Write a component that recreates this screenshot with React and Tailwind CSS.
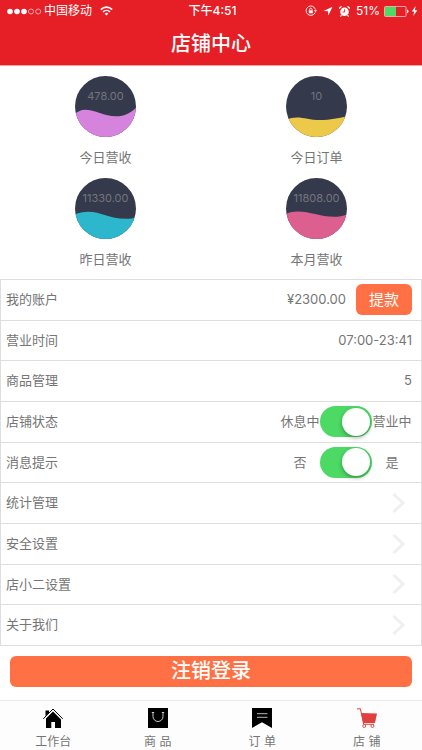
import React, { useState } from 'react'

const gauges = [
  {
    label: '今日营收',
    value: '478.00',
    fill: '#d683dd',
    wave: 'M0 37.5 C4 35 6 33.7 10 33.7 C20 33.7 29 40.3 41 40.3 C50 40.3 55 37 61 32 V61 H0 Z'
  },
  {
    label: '今日订单',
    value: '10',
    fill: '#edc94a',
    wave: 'M0 44 C4 42 7 41.4 11 41.4 C18 41.4 24 44 34 44 C45 44 52 42 61 40.5 V61 H0 Z'
  },
  {
    label: '昨日营收',
    value: '11330.00',
    fill: '#2cb7cd',
    wave: 'M0 36.3 C4 34.5 8 33.7 13 33.7 C26 33.7 34 40.8 51 40.8 C55 40.8 58 40.4 61 39.5 V61 H0 Z'
  },
  {
    label: '本月营收',
    value: '11808.00',
    fill: '#dc5f8f',
    wave: 'M0 36 C4 34.3 7 33.6 12 33.6 C24 33.6 34 38.8 48 38.8 C53 38.8 57 38 61 36.5 V61 H0 Z'
  }
]

const links = ['统计管理', '安全设置', '店小二设置', '关于我们']

// Status bar
const StatusBar = () => (
  <div className="grid grid-cols-[1fr_auto_1fr] items-center h-[22px] pl-[7px] pr-1 text-[12px] leading-4">
    <div className="flex items-center">
      <svg className="w-[35px] h-[7px]" viewBox="0 0 35 7" fill="#fff">
        <circle cx="3" cy="3.5" r="2.8" />
        <circle cx="10" cy="3.5" r="2.8" />
        <circle cx="17" cy="3.5" r="2.8" />
        <circle cx="24" cy="3.5" r="2.5" fill="none" stroke="#fff" strokeWidth="0.6" />
        <circle cx="31.2" cy="3.5" r="2.5" fill="none" stroke="#fff" strokeWidth="0.6" />
      </svg>
      <span className="ml-0.5">中国移动</span>
      <svg className="ml-2 w-[13px] h-[10px]" viewBox="0 0 13 10" fill="none" stroke="#fff" strokeWidth="1.6">
        <path d="M0.8 3.6 C4 0.3 9 0.3 12.2 3.6" />
        <path d="M3 5.9 C5 4 8 4 10 5.9" />
        <path d="M4.6 7.6 C5.8 6.6 7.2 6.6 8.4 7.6 L6.5 9.6 Z" fill="#fff" stroke="none" />
      </svg>
    </div>
    <span className="font-medium">下午4:51</span>
    <div className="flex items-center justify-end">
      <svg className="w-3 h-3" viewBox="0 0 12 12" fill="none" stroke="#fff" strokeWidth="0.9">
        <path d="M10.2 7.4 A4.7 4.7 0 1 1 10.4 4.6" />
        <path d="M9 5.2 H12 L10.5 7.2 Z" fill="#fff" stroke="none" />
        <rect x="3.8" y="5.3" width="4" height="3" fill="#fff" stroke="none" />
        <path d="M4.6 5.4 V4.4 A1.2 1.2 0 0 1 7 4.4 V5.4" strokeWidth="0.8" />
      </svg>
      <svg className="ml-1.5 w-[10px] h-[10px]" viewBox="0 0 10 10" fill="#fff">
        <path d="M9.5 0.8 L0.6 4.9 L5 5.3 L5.4 9.6 Z" />
      </svg>
      <svg className="ml-1.5 w-[11px] h-[11px]" viewBox="0 0 11 11" fill="#fff">
        <circle cx="5.5" cy="5.8" r="4.3" />
        <path d="M0.3 3.2 A2 2 0 0 1 3.2 0.6 Z M10.7 3.2 A2 2 0 0 0 7.8 0.6 Z" />
        <path d="M2.6 9 L1.4 10.6 M8.4 9 L9.6 10.6" stroke="#fff" strokeWidth="1.2" />
        <path d="M5.6 3.3 V6 H3.6" fill="none" stroke="#e61e25" strokeWidth="0.9" />
      </svg>
      <span className="ml-1.5">51%</span>
      <svg className="ml-1 w-[25px] h-[11px]" viewBox="0 0 25 11">
        <rect x="0.5" y="0.5" width="21.5" height="10" rx="1" fill="none" stroke="#fff" strokeWidth="0.6" />
        <rect x="1" y="1" width="11" height="9" fill="#4cd964" />
        <path d="M23 3.6 C25 4 25 7 23 7.4 Z" fill="#fff" />
      </svg>
      <svg className="ml-0.5 w-[7px] h-[10px]" viewBox="0 0 7 10" fill="#fff">
        <path d="M4.6 0 L0.8 5.6 H3.2 L2.2 10 L6.4 4.2 H3.9 Z" />
      </svg>
    </div>
  </div>
)

const Gauge = ({ label, value, fill, wave, id }) => (
  <div className="flex flex-col items-center">
    <div className="relative w-[61px] h-[61px]">
      <svg className="w-full h-full" viewBox="0 0 61 61">
        <clipPath id={id}>
          <circle cx="30.5" cy="30.5" r="30.5" />
        </clipPath>
        <g clipPath={`url(#${id})`}>
          <rect width="61" height="61" fill="#35394c" />
          <path d={wave} fill={fill} />
        </g>
      </svg>
      <span className="absolute inset-x-0 top-3 text-center text-[11px] leading-4 text-[#74757c]">{value}</span>
    </div>
    <span className="mt-[11px] leading-[18px]">{label}</span>
  </div>
)

const Row = ({ label, children }) => (
  <div className="flex items-center justify-between pl-[5px] pr-[9px] border-b border-[#dedede]">
    <span>{label}</span>
    {children}
  </div>
)

const SwitchRow = ({ label, off, on }) => {
  const [checked, setChecked] = useState(true)

  return (
    <Row label={label}>
      <label className="flex items-center">
        <span className="w-10 text-center whitespace-nowrap">{off}</span>
        <input
          type="checkbox"
          role="switch"
          aria-label={label}
          checked={checked}
          onChange={(e) => setChecked(e.target.checked)}
          className="appearance-none flex items-center w-[52px] h-[31px] px-0.5 rounded-full bg-gray-200 checked:bg-[#4cd964] checked:justify-end before:block before:w-7 before:h-7 before:rounded-full before:bg-white before:shadow-[0_2px_4px_rgba(0,0,0,0.3)]"
        />
        <span className="w-10 text-center whitespace-nowrap">{on}</span>
      </label>
    </Row>
  )
}

const LinkRow = ({ label }) => (
  <a href="#" className="flex items-center justify-between pl-[5px] pr-4 border-b border-[#dedede]">
    <span>{label}</span>
    <svg className="w-[13px] h-5" viewBox="0 0 13 20" fill="none" stroke="#f0f0f0" strokeWidth="3">
      <path d="M1.5 1 L11 10 L1.5 19" />
    </svg>
  </a>
)

// Tab bar icons
const HomeIcon = () => (
  <svg className="w-5 h-5" viewBox="0 0 20 20">
    <path d="M2.5 2.5 H6 V4.6 L2.5 8 Z" />
    <path d="M0.3 10.8 L10 1 L19.7 10.8" fill="none" stroke="#000" strokeWidth="1" />
    <path d="M10 3.4 L18 11.4 V20 H12 V14 H8.3 V20 H3 V10.4 Z" />
  </svg>
)

const BagIcon = () => (
  <svg className="w-5 h-5" viewBox="0 0 20 20">
    <rect width="20" height="20" />
    <path d="M3.8 4.5 H6.2 M13.8 4.5 H16.2 M5 4.5 V8.5 A5 5 0 0 0 15 8.5 V4.5" fill="none" stroke="#ddd" strokeWidth="0.9" />
  </svg>
)

const OrderIcon = () => (
  <svg className="w-5 h-5" viewBox="0 0 20 20">
    <path d="M0 0 H20 V20 L10 14.3 L0 20 Z" />
    <path d="M5 5.7 H15.5 M5 9.3 H15.5" stroke="#ccc" strokeWidth="0.9" />
  </svg>
)

const CartIcon = () => (
  <svg className="w-5 h-5" viewBox="0 0 20 20">
    <path d="M4 5 L20 5.6 L18 15 H6.4 Z" fill="#e0413f" />
    <path d="M0 0.8 H3.4 L6.6 16 M6.4 16.3 H17" fill="none" stroke="#e0413f" strokeWidth="1" />
    <circle cx="7.2" cy="18" r="1.5" fill="#fff" stroke="#e0413f" strokeWidth="0.9" />
    <circle cx="15.4" cy="18" r="1.5" fill="#fff" stroke="#e0413f" strokeWidth="0.9" />
  </svg>
)

const tabs = [
  { label: '工作台', icon: HomeIcon },
  { label: '商 品', icon: BagIcon },
  { label: '订 单', icon: OrderIcon },
  { label: '店 铺', icon: CartIcon }
]

const App = () => {
  return (
    <div className="flex flex-col min-h-screen bg-white font-['Inter','Noto_Sans_CJK_SC',sans-serif] text-[13px] text-[#757575]">
      <header className="bg-[#e61e25] border-b border-[#f4a0a3] text-white">
        <StatusBar />
        <h1 className="h-[43px] text-center text-[20px] leading-[45px] font-medium">店铺中心</h1>
      </header>

      <section className="grid grid-cols-2 gap-y-3 pt-[10px] pb-[11px]">
        {gauges.map((gauge, index) => (
          <Gauge key={gauge.label} id={`gauge-${index}`} {...gauge} />
        ))}
      </section>

      <main className="flex-1 grid auto-rows-fr border border-b-0 border-[#dedede]">
        <Row label="我的账户">
          <div className="flex items-center gap-[10px]">
            <span>¥2300.00</span>
            <button type="button" className="w-14 h-[31px] rounded-md bg-[#ff7144] text-[15px] text-white">
              提款
            </button>
          </div>
        </Row>
        <Row label="营业时间">
          <span>07:00-23:41</span>
        </Row>
        <Row label="商品管理">
          <span>5</span>
        </Row>
        <SwitchRow label="店铺状态" off="休息中" on="营业中" />
        <SwitchRow label="消息提示" off="否" on="是" />
        {links.map((label) => (
          <LinkRow key={label} label={label} />
        ))}
      </main>

      <div className="px-[10px] pt-[10px] pb-[13px]">
        <button type="button" className="block w-full h-[31px] rounded-md bg-[#ff7144] text-[20px] leading-[31px] font-medium text-white">
          注销登录
        </button>
      </div>

      <nav className="grid grid-cols-4 h-[50px] pt-[7px] pl-px pr-[3px] border-t border-[#e8e8e8] bg-[#fdfdfd] text-[12px] leading-4">
        {tabs.map(({ label, icon: Icon }) => (
          <a key={label} href="#" className="flex flex-col items-center gap-[6px]">
            <Icon />
            <span>{label}</span>
          </a>
        ))}
      </nav>
    </div>
  )
}

export default App
